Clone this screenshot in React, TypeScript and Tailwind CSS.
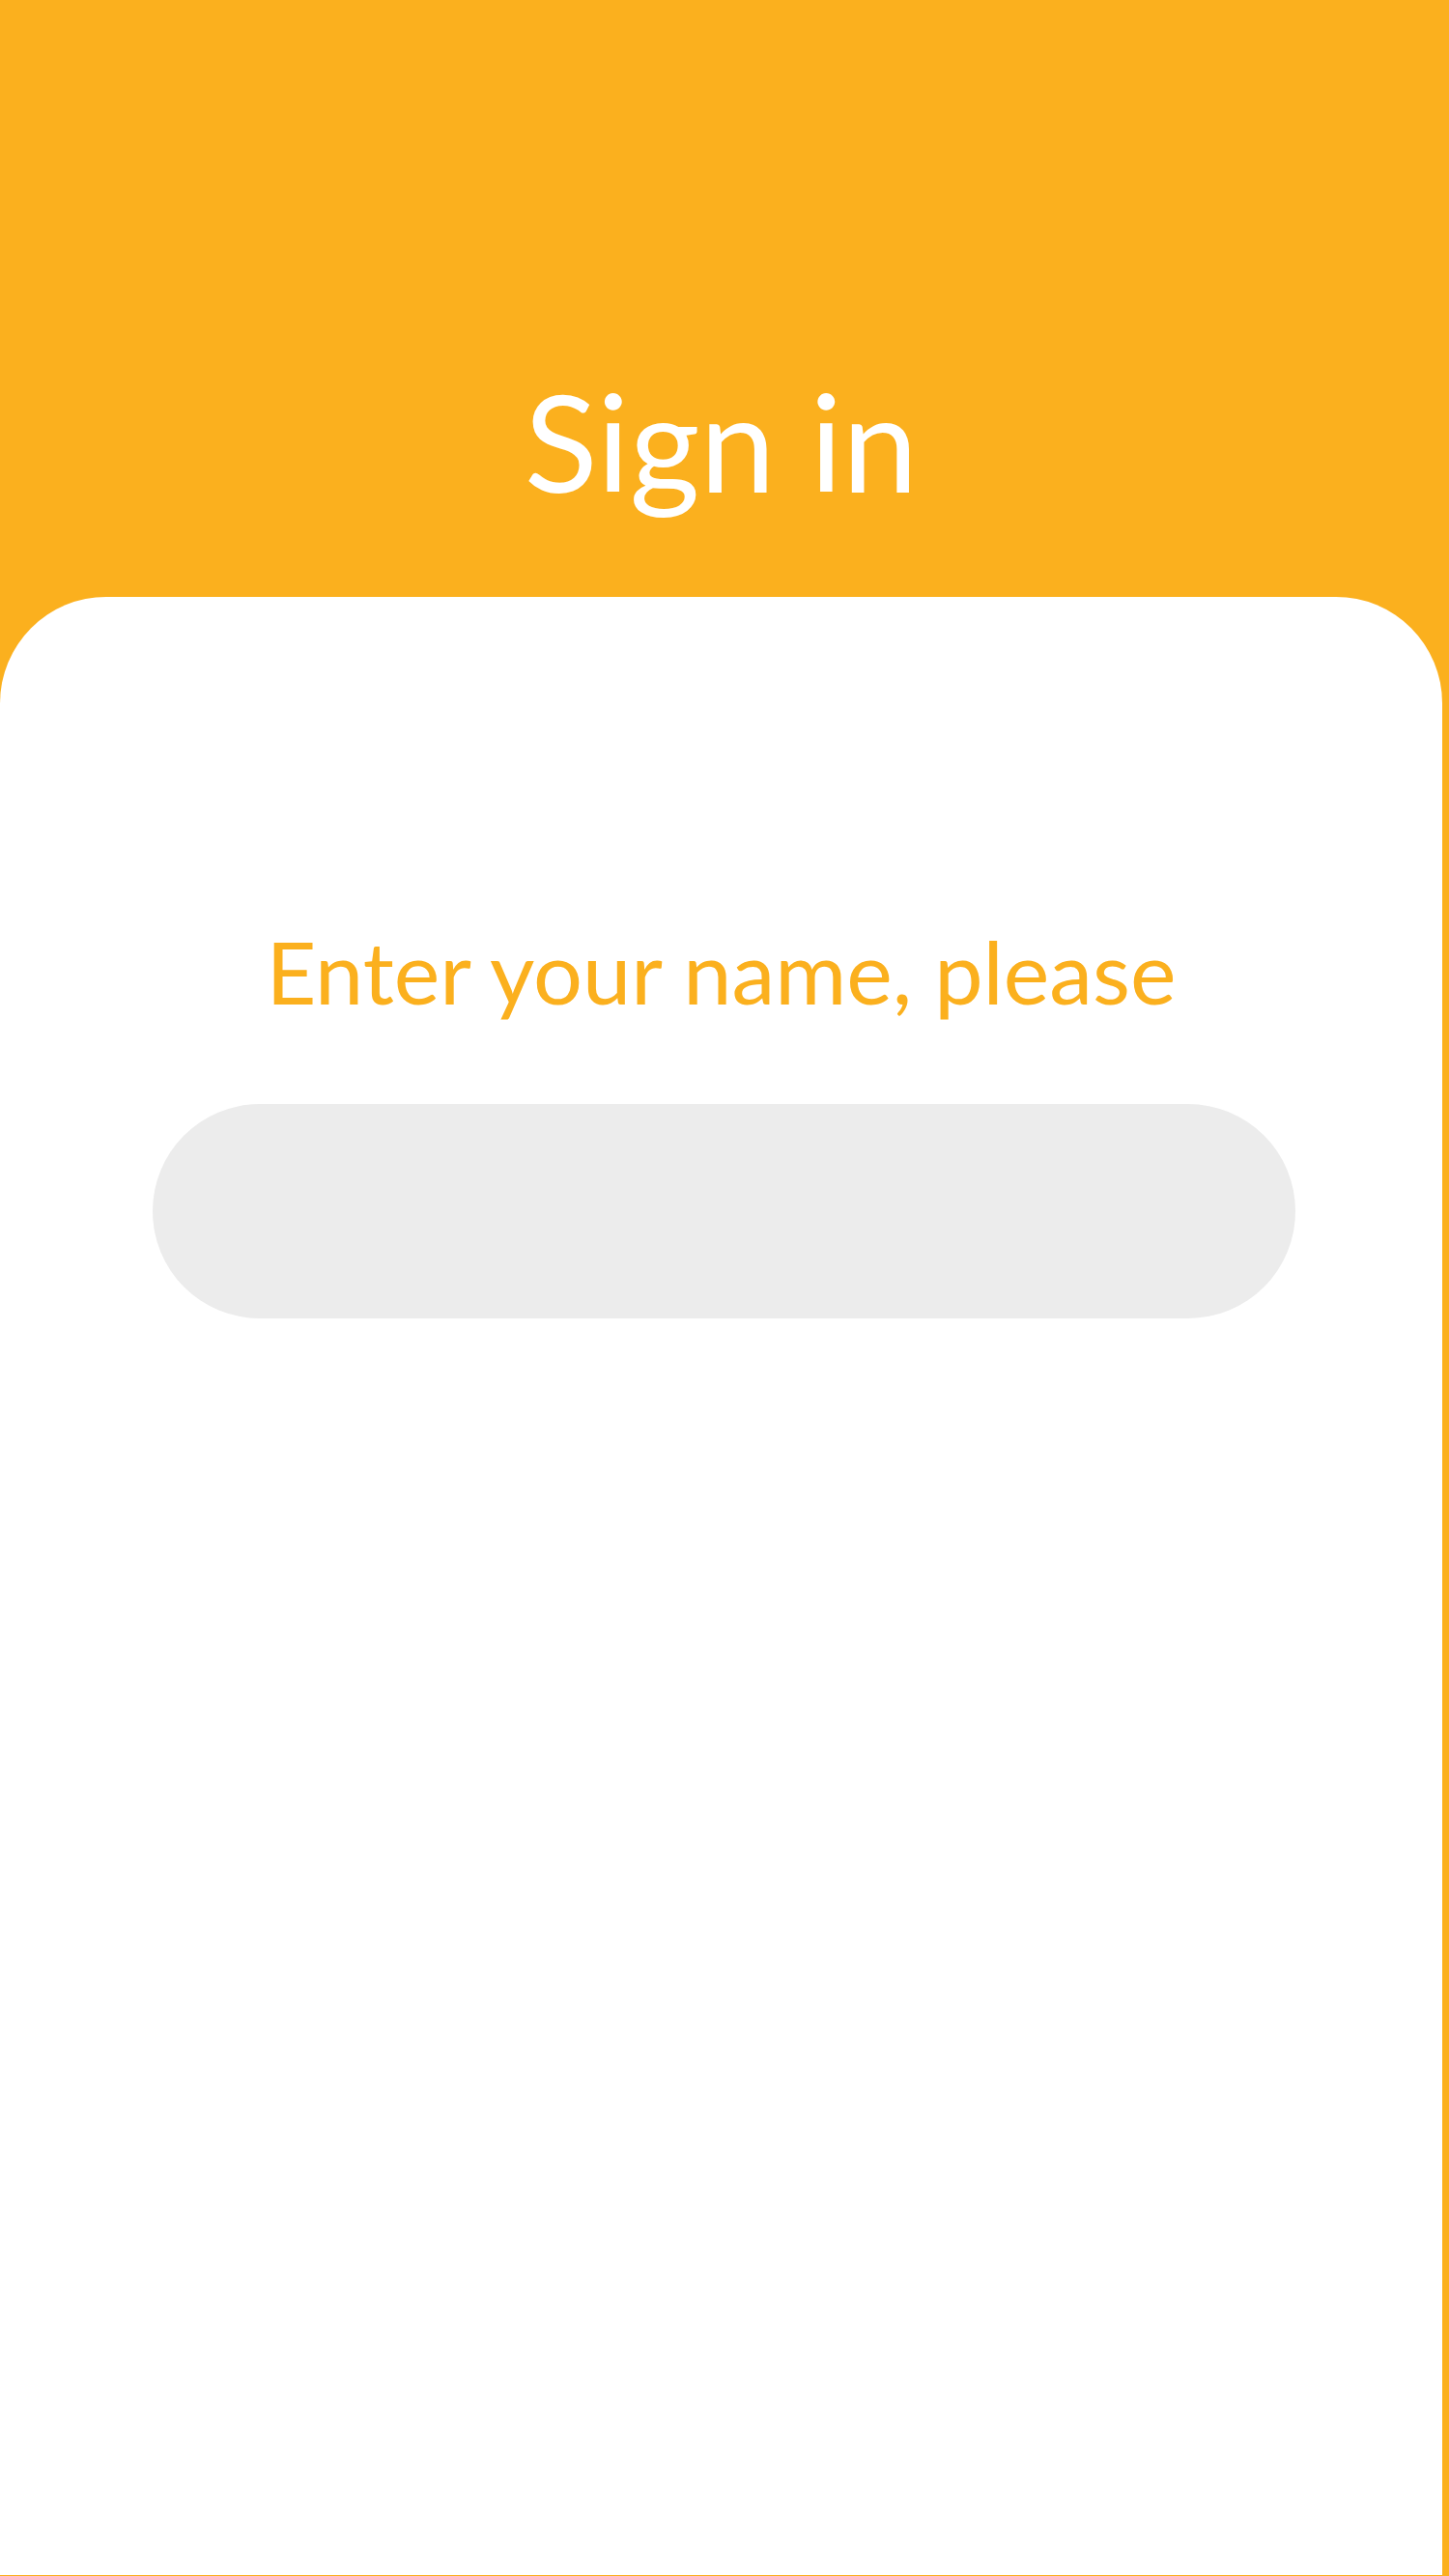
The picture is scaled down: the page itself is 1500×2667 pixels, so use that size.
export default function App() {
  return (
    <div className="min-h-screen w-full bg-[#FBB01E]">
      <div className="w-[1493px]">
        {/* Header */}
        <header className="h-[618px] pt-[386px]">
          <h1 className="text-center text-[140px] leading-none text-white font-['Lato',sans-serif] font-normal">
            Sign in
          </h1>
        </header>

        {/* Card */}
        <main className="h-[2048px] bg-white rounded-t-[110px] pt-[342px]">
          <p className="text-center text-[90px] leading-none text-[#FBB01E] font-['Lato',sans-serif]">
            Enter your name, please
          </p>
          <div className="ml-[158px] mt-[93px] w-[1183px] h-[222px] rounded-full bg-[#ECECEC]" />
        </main>
      </div>
    </div>
  );
}
